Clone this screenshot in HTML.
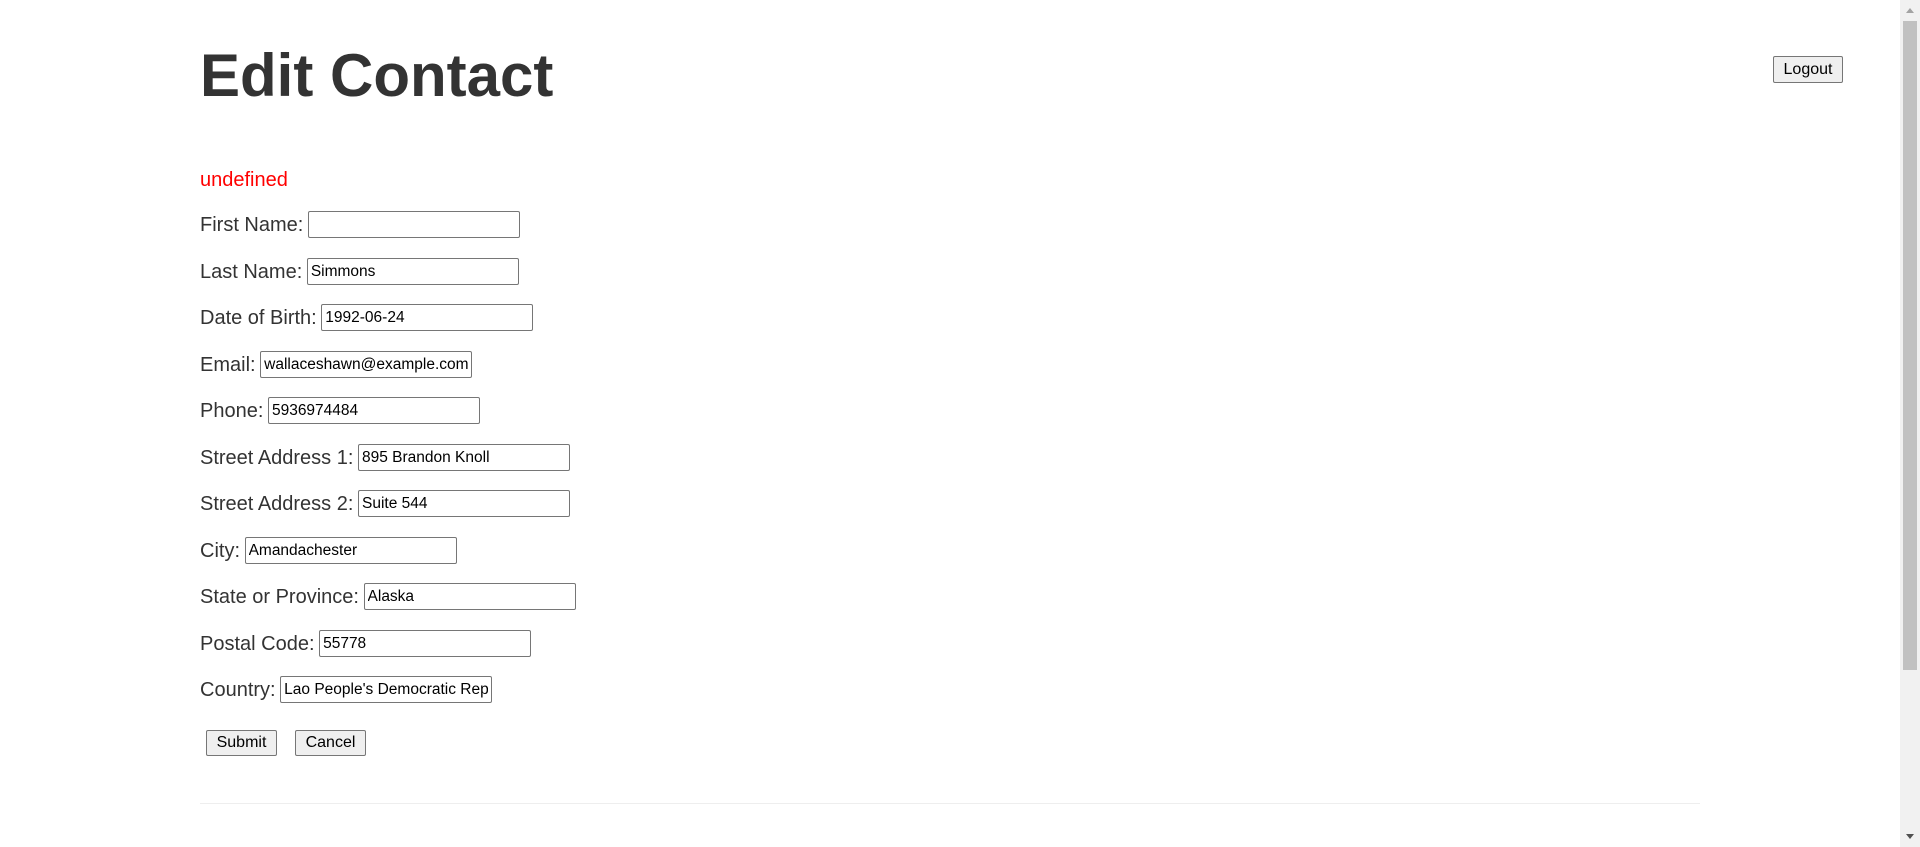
<!DOCTYPE html>
<html><head><style>
html,body{margin:0;padding:0;background:#fff;width:1920px;height:847px;overflow:hidden;font-family:"Liberation Sans",Arial,sans-serif;}
h1{position:absolute;left:200px;top:38px;margin:0;font-size:60px;font-weight:bold;color:#333;line-height:76px;}
.err{position:absolute;left:200px;top:168px;color:red;font-size:20px;line-height:24px;}
.row{position:absolute;left:200px;font-size:20px;color:#333;line-height:28px;height:28px;white-space:nowrap;}
.row input{font-family:"Liberation Sans",Arial,sans-serif;font-size:15.5px;width:204px;height:23px;padding:1px 3px;border:1px solid #767676;border-radius:2px;vertical-align:top;margin-left:-1px;color:#000;box-sizing:content-box;}
button{position:absolute;font-family:"Liberation Sans",Arial,sans-serif;font-size:16px;background:#efefef;border:1px solid #767676;border-radius:2px;color:#000;padding:0;height:26px;}
hr{position:absolute;left:200px;top:803px;width:1500px;margin:0;border:0;border-top:1px solid #eee;}
.sb{position:absolute;right:0;top:0;width:20px;height:847px;background:#f1f1f1;}
.th{position:absolute;left:3px;top:21px;width:14px;height:649px;background:#c1c1c1;}
.up{position:absolute;left:6px;top:8px;border:4px solid transparent;border-bottom:5px solid #a3a3a3;border-top:0;width:0;height:0;}
.dn{position:absolute;left:6px;bottom:8px;border:4px solid transparent;border-top:5px solid #505050;border-bottom:0;width:0;height:0;}
</style></head><body>
<h1>Edit Contact</h1>
<button style="left:1773px;top:56px;width:70px;height:27px;">Logout</button>
<div class="err">undefined</div>
<div class="row" style="top:211px">First Name: <input value=""></div>
<div class="row" style="top:258px">Last Name: <input value="Simmons"></div>
<div class="row" style="top:304px">Date of Birth: <input value="1992-06-24"></div>
<div class="row" style="top:351px">Email: <input value="wallaceshawn@example.com"></div>
<div class="row" style="top:397px">Phone: <input value="5936974484"></div>
<div class="row" style="top:444px">Street Address 1: <input value="895 Brandon Knoll"></div>
<div class="row" style="top:490px">Street Address 2: <input value="Suite 544"></div>
<div class="row" style="top:537px">City: <input value="Amandachester"></div>
<div class="row" style="top:583px">State or Province: <input value="Alaska"></div>
<div class="row" style="top:630px">Postal Code: <input value="55778"></div>
<div class="row" style="top:676px">Country: <input value="Lao People's Democratic Republic"></div>
<button style="left:206px;top:730px;width:71px;">Submit</button>
<button style="left:295px;top:730px;width:71px;">Cancel</button>
<hr>
<div class="sb"><div class="up"></div><div class="th"></div><div class="dn"></div></div>
</body></html>
